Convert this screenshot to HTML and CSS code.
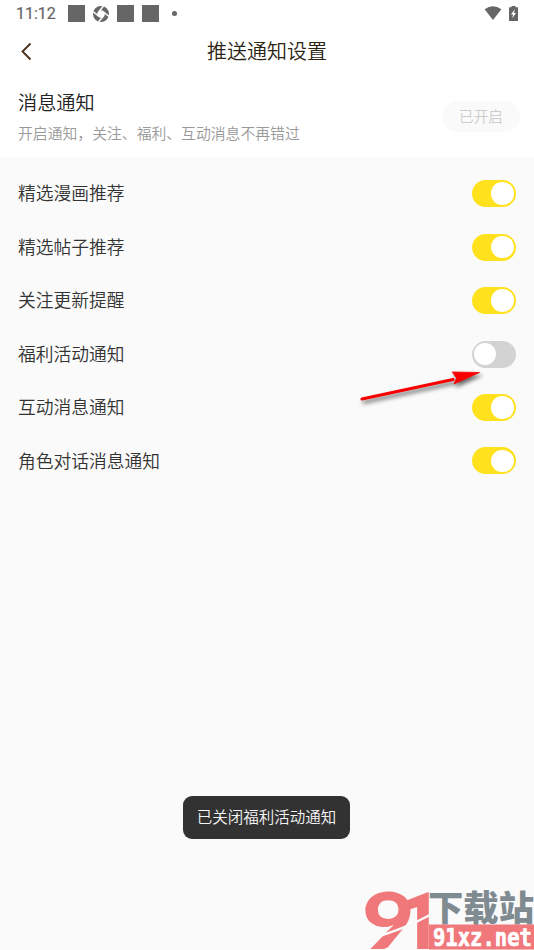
FILE: index.html
```html
<!DOCTYPE html>
<html lang="zh-CN">
<head>
<meta charset="utf-8">
<title>推送通知设置</title>
<link rel="stylesheet" href="styles.css">
</head>
<body>
<div class="screen">
  <div class="status">
    <span class="time">11:12</span>
    <i class="block"></i>
    <svg class="aperture" width="16" height="16" viewBox="0 0 16 16"><circle cx="8" cy="8" r="5.900" fill="none" stroke="#666" stroke-width="4.200"/><path d="M0 5.500 5.500 10M10.500 0 6 5.500M16 10.500 10.500 6M5.500 16 10 10.500" fill="none" stroke="#fff" stroke-width="1.500"/></svg>
    <i class="block"></i>
    <i class="block"></i>
    <i class="dot"></i>
    <svg class="wifi" width="18" height="15" viewBox="0 0 18 15"><path d="M.6 3.300Q9-2.900 17.400 3.300L9 14Z" fill="#666"/></svg>
    <svg class="battery" width="9" height="15" viewBox="0 0 9 15"><path d="M2.500 0h4v1.300H9V15H0V1.300h2.500Z" fill="#666"/><path d="M5.800 3.300 2 8.500h2L3.300 12.300 7 7H5Z" fill="#fff"/></svg>
  </div>
  <header class="nav">
    <svg class="back" width="12" height="20" viewBox="0 0 12 20"><path d="M10.500 1.500 2.500 9.500l8 8" fill="none" stroke="#4a2d17" stroke-width="1.800"/></svg>
    <h1>推送通知设置</h1>
  </header>
  <section class="master">
    <div>
      <h2>消息通知</h2>
      <p>开启通知，关注、福利、互动消息不再错过</p>
    </div>
    <span class="pill">已开启</span>
  </section>
  <main class="list">
    <div class="row"><span>精选漫画推荐</span><i class="switch on"></i></div>
    <div class="row"><span>精选帖子推荐</span><i class="switch on"></i></div>
    <div class="row"><span>关注更新提醒</span><i class="switch on"></i></div>
    <div class="row"><span>福利活动通知</span><i class="switch"></i></div>
    <div class="row"><span>互动消息通知</span><i class="switch on"></i></div>
    <div class="row"><span>角色对话消息通知</span><i class="switch on"></i></div>
  </main>
  <svg class="arrow" width="130" height="46" viewBox="0 0 130 46"><path d="M7 34 98 14.500" /><path class="head" d="M97.500 7 124.500 7.500 99 19 101.500 13.500Z"/></svg>
  <div class="toast">已关闭福利活动通知</div>
  <svg class="brand" width="174" height="62" viewBox="0 0 174 62">
    <text class="nine" transform="translate(2 61) scale(1.150 1)">9</text>
    <text class="one" transform="translate(40 61) scale(.88 1)">1</text>
    <path d="M12 50Q40 43 72 26" fill="none" stroke="#fafafa" stroke-width="2.500"/>
    <text class="cn" x="68" y="33" textLength="106" lengthAdjust="spacingAndGlyphs">下载站</text>
    <path d="M69 36.500h105v25H69Z" fill="#f0777a"/>
    <text class="url" transform="translate(73 57.500)" textLength="99" lengthAdjust="spacingAndGlyphs">91xz.net</text>
  </svg>
</div>
</body>
</html>
```
FILE: styles.css
```css
* { box-sizing: border-box; margin: 0; padding: 0; }
body { font-family: "Noto Sans CJK SC", sans-serif; font-weight: 350; background: #fafafa; overflow: hidden; }
.screen { position: relative; width: 534px; height: 950px; display: flex; flex-direction: column; background: #fafafa; }
.status { height: 27px; display: flex; align-items: center; padding-left: 16px; background: #fff; color: #666; }
.time { width: 51.500px; font: 400 16px/27px Roboto, sans-serif; -webkit-text-stroke: .2px #666; }
.block { width: 17px; height: 17px; background: #666; }
.aperture { margin: 0 8px; }
.block + .block { margin-left: 8px; }
.dot { width: 5px; height: 5px; border-radius: 50%; background: #666; margin-left: 13px; }
.wifi { margin-left: auto; margin-right: 7px; }
.battery { margin-right: 16px; margin-top: -1px; }
.nav { height: 49px; display: grid; grid-template-columns: 40px 1fr 40px; align-items: center; background: #fff; }
.back { margin-left: 20px; }
.nav h1 { text-align: center; font-size: 20px; line-height: 30px; font-weight: 350; color: #2b2413; margin-top: -2px; }
.master { height: 82px; display: flex; justify-content: space-between; align-items: flex-start; background: #fff; padding: 11px 14px 0 18px; }
h2 { font-size: 19.200px; line-height: 30px; font-weight: 350; color: #222; }
.master p { font-size: 14.830px; line-height: 22px; margin-top: 5px; color: #999; }
.pill { width: 78px; height: 31px; margin-top: 14px; border-radius: 16px; background: #fafafa; color: #ccc; font-size: 14.600px; line-height: 30px; text-align: center; }
.list { padding: 9px 18px 0; }
.row { height: 53.450px; display: flex; align-items: center; justify-content: space-between; color: #333; font-size: 17.750px; line-height: 27px; }
.row span { margin-top: -1.500px; }
.switch { width: 44.500px; height: 27px; padding: 2.200px; border-radius: 14px; background: #d3d3d3; display: flex; }
.switch::after { content: ""; width: 22.500px; height: 22.500px; border-radius: 50%; background: #fff; }
.switch.on { background: #ffe11e; justify-content: flex-end; }
.arrow { position: absolute; left: 355px; top: 365px; filter: drop-shadow(2px 3px 2px rgba(0,0,0,.6)); }
.arrow path { stroke: #f80000; stroke-width: 3.200; stroke-linecap: round; fill: none; }
.arrow .head { fill: #f80000; stroke-width: .8; }
.toast { position: absolute; left: 183px; top: 796px; width: 167px; height: 43px; border-radius: 9px; background: #323232; color: #f5f5f5; font-size: 15.500px; line-height: 41px; text-align: center; }
.brand { position: absolute; left: 360px; top: 888px; }
.nine { font: 900 79px Lato, sans-serif; fill: #f0777a; }
.one { font: 900 80px Roboto, sans-serif; fill: #f0777a; }
.cn { font: 900 35px "Noto Sans CJK SC", sans-serif; fill: #7f8a91; }
.url { font: 700 25px "DejaVu Sans Mono", monospace; fill: #fff; stroke: #fff; stroke-width: .7; }
```
